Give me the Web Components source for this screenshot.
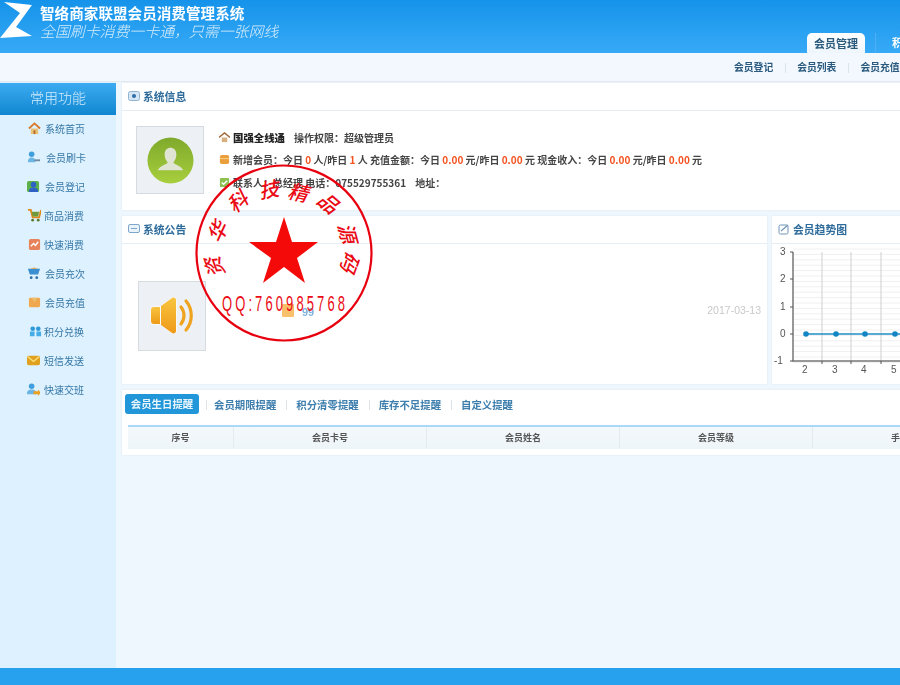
<!DOCTYPE html>
<html lang="zh">
<head>
<meta charset="utf-8">
<title>智络商家联盟会员消费管理系统</title>
<style>
  html, body { margin: 0; padding: 0; width: 900px; height: 685px; overflow: hidden; background: #eef7fe; }
  body { font-family: "Noto Sans CJK SC", "Liberation Sans", sans-serif; }
</style>
</head>
<body>
<app-shell>
  <app-header slot="header"></app-header>
  <sub-nav slot="subnav"></sub-nav>
  <side-menu slot="side"></side-menu>
  <info-panel slot="main"></info-panel>
  <notice-panel slot="main"></notice-panel>
  <remind-panel slot="main"></remind-panel>
</app-shell>
<red-stamp></red-stamp>

<script>
const soft = 'filter: blur(.45px);';

const icons = {
  home: '<path d="M1 7 7 1.500 13 7" fill="none" stroke="#d9772b" stroke-width="2"/><path d="M3 7h8v6H3z" fill="#e9c27a"/><path d="M6 9h2v4H6z" fill="#b56a2a"/>',
  card: '<circle cx="5" cy="3.500" r="3" fill="#3f9fdc"/><path d="M1 12c0-4 2-5 4-5s4 1 4 5z" fill="#6cb6e6"/><path d="M8 9h6v2H8z" fill="#6f8aa0"/>',
  reg: '<rect x="0" y="1" width="13" height="12" rx="2" fill="#5cb04a"/><circle cx="7" cy="5" r="3" fill="#2f62c4"/><path d="M2 13c0-4 2-5 5-5s5 1 5 5z" fill="#2f62c4"/>',
  cart: '<path d="M0 1h3l2 8h7l2-8" fill="none" stroke="#e08a1e" stroke-width="2"/><path d="M4 3h8l-1 5H5z" fill="#6f9a3a"/><circle cx="5" cy="12" r="1.500" fill="#5a7a2c"/><circle cx="11" cy="12" r="1.500" fill="#5a7a2c"/>',
  fast: '<rect x="1" y="1" width="12" height="12" rx="2" fill="#e8825a"/><path d="M3 9l3-3 2 2 3-4" fill="none" stroke="#fff" stroke-width="1.500"/>',
  times: '<path d="M1 2h13l-2 6H3z" fill="#3a8fd0"/><path d="M3 2l5-1.500 4 1.500" fill="#e9a03a"/><circle cx="4.500" cy="11.500" r="1.500" fill="#2c6ea8"/><circle cx="10.500" cy="11.500" r="1.500" fill="#2c6ea8"/>',
  pay: '<rect x="1" y="2" width="12" height="10" rx="1.500" fill="#f0a850"/><path d="M4 2l3 5 3-5" fill="#e8c070"/>',
  gift: '<circle cx="4" cy="4" r="2.500" fill="#2f9ad8"/><circle cx="10" cy="4" r="2.500" fill="#2f9ad8"/><path d="M1 7h5v5H1zM8 7h5v5H8z" fill="#46aee6"/>',
  sms: '<rect x="0" y="2" width="14" height="10" rx="2" fill="#e0a020"/><path d="M1 3l6 5 6-5" fill="none" stroke="#fbe27a" stroke-width="1.500"/>',
  shift: '<circle cx="5" cy="3.500" r="3" fill="#3f9fdc"/><path d="M0 12c0-4 2-5 5-5s5 1 5 5z" fill="#6cb6e6"/><path d="M7 9h5v-2l3 3.500-3 3.500v-2H7z" fill="#eaa020"/>'
};

class AppShell extends HTMLElement {
  connectedCallback() {
    this.attachShadow({ mode: 'open' });
    this.shadowRoot.innerHTML = `
      <style>
        :host { display: flex; flex-direction: column; width: 900px; height: 685px; overflow: hidden; }
        .body { flex: 1; display: flex; min-height: 0; }
        .main { width: 800px; flex: none; margin-left: 6px; padding-top: 1px; display: flex; flex-direction: column; gap: 6px; }
        footer { height: 17px; flex: none; background: #27a0ee; }
      </style>
      <slot name="header"></slot>
      <slot name="subnav"></slot>
      <div class="body">
        <slot name="side"></slot>
        <div class="main"><slot name="main"></slot></div>
      </div>
      <footer></footer>
    `;
  }
}

class AppHeader extends HTMLElement {
  connectedCallback() {
    this.attachShadow({ mode: 'open' });
    this.shadowRoot.innerHTML = `
      <style>
        :host { display: flex; height: 53px; flex: none; color: #fff; background: linear-gradient(#1593ea, #37aaf6); ${soft} }
        svg { width: 34px; height: 41px; flex: none; }
        .brand { margin-left: 6px; padding-top: 3px; display: flex; flex-direction: column; }
        h1 { margin: 0; font-size: 14.600px; line-height: 20px; font-weight: 700; white-space: nowrap; }
        p { margin: 0; font-size: 14.900px; line-height: 16px; font-weight: 300; font-style: italic; color: #d8eefc; white-space: nowrap; }
        nav { margin-left: auto; display: flex; align-self: flex-end; align-items: flex-end; width: 93px; flex: none; overflow: hidden; white-space: nowrap; }
        .tab { width: 58px; height: 20px; flex: none; text-align: center; background: linear-gradient(#fff, #eef6fc); border-radius: 5px 5px 0 0; color: #2a5a7c; font-size: 11px; font-weight: 700; line-height: 21px; }
        .other { margin-left: 10px; padding-left: 16px; border-left: 1px solid #4db0f4; font-size: 11px; font-weight: 700; line-height: 18px; height: 20px; }
      </style>
      <svg viewBox="0 0 34 41"><path d="M4 2 32 5 16 27 32 36 0 38 20 13z" fill="#fff"/></svg>
      <div class="brand">
        <h1>智络商家联盟会员消费管理系统</h1>
        <p>全国刷卡消费一卡通，只需一张网线</p>
      </div>
      <nav><span class="tab">会员管理</span><span class="other">积分管理</span></nav>
    `;
  }
}

class SubNav extends HTMLElement {
  connectedCallback() {
    this.attachShadow({ mode: 'open' });
    this.shadowRoot.innerHTML = `
      <style>
        :host { display: flex; justify-content: flex-end; align-items: center; height: 28px; flex: none; overflow: hidden; background: #f2f8fd; border-bottom: 1px solid #e3e9ef; ${soft} }
        .list { display: flex; gap: 24px; width: 166px; flex: none; white-space: nowrap; font-size: 9.800px; font-weight: 700; color: #2b5a7e; margin-top: -1px; }
        span { flex: none; position: relative; }
        span + span::before { content: ""; position: absolute; left: -12px; top: 3px; height: 10px; border-left: 1px solid #dbe5ec; }
      </style>
      <div class="list"><span>会员登记</span><span>会员列表</span><span>会员充值</span></div>
    `;
  }
}

class SideMenu extends HTMLElement {
  connectedCallback() {
    const items = [
      ['home', '系统首页', 28, 45], ['card', '会员刷卡', 27, 46], ['reg', '会员登记', 27, 45], ['cart', '商品消费', 28, 44],
      ['fast', '快速消费', 28, 44], ['times', '会员充次', 27, 45], ['pay', '会员充值', 28, 45], ['gift', '积分兑换', 29, 44],
      ['sms', '短信发送', 27, 44], ['shift', '快速交班', 27, 44]
    ];
    this.attachShadow({ mode: 'open' });
    this.shadowRoot.innerHTML = `
      <style>
        :host { display: block; width: 116px; flex: none; padding-top: 1px; background: #def1fe; ${soft} }
        h2 { margin: 0; height: 32px; line-height: 28px; text-align: center; font-size: 14px; font-weight: 300; color: #d4ecfb; background: linear-gradient(#3dabf1, #0f87d0); }
        ul { margin: -1px 0 0; padding: 0; list-style: none; }
        li { height: 29px; display: flex; align-items: center; font-size: 10px; color: #3577a6; white-space: nowrap; }
        svg { width: 13px; height: 13px; flex: none; }
      </style>
      <h2>常用功能</h2>
      <ul>
        ${items.map(([icon, text, left, textLeft]) => `<li style="padding-left:${left}px"><svg viewBox="0 0 14 14" style="margin-right:${textLeft - left - 13}px">${icons[icon]}</svg>${text}</li>`).join('')}
      </ul>
    `;
  }
}

class PanelBox extends HTMLElement {
  connectedCallback() {
    this.attachShadow({ mode: 'open' });
    this.shadowRoot.innerHTML = `
      <style>
        :host { display: block; background: #fff; box-shadow: 0 0 2px #dfe8f0; ${soft} }
        header { height: 28px; display: flex; align-items: center; gap: 3px; padding: 0 0 2px 6px; box-sizing: border-box; border-bottom: 1px solid #e6edf3; font-size: 10.800px; font-weight: 700; color: #2f6c9c; white-space: nowrap; }
        ::slotted(svg) { width: 12px; height: 12px; flex: none; }
      </style>
      <header><slot name="icon"></slot><slot name="title"></slot></header>
      <slot></slot>
    `;
  }
}

class InfoPanel extends HTMLElement {
  connectedCallback() {
    const red = v => `<b>${v}</b>`;
    this.attachShadow({ mode: 'open' });
    this.shadowRoot.innerHTML = `
      <style>
        :host { display: block; }
        panel-box { height: 127px; }
        .body { display: flex; align-items: flex-start; padding: 15px 0 0 14px; }
        .avatar { width: 66px; height: 66px; flex: none; display: flex; align-items: center; justify-content: center; background: #edf1f5; border: 1px solid #d6dbe0; }
        .avatar svg { width: 47px; height: 47px; }
        .rows { margin: 0 0 0 15px; display: flex; flex-direction: column; font-family: "Noto Sans CJK TC", sans-serif; }
        .row { height: 22.500px; display: flex; align-items: center; font-size: 10px; font-weight: 700; color: #444; white-space: pre; }
        .row svg { width: 11px; height: 11px; flex: none; margin-right: 3px; }
        .row strong { font-size: 10.400px; color: #222; margin-right: 9px; }
        b { color: #f4511e; font-weight: 700; }
      </style>
      <panel-box>
        <svg slot="icon" viewBox="0 0 12 12"><rect x=".5" y="1.500" width="11" height="9" rx="2" fill="#d5e6f5" stroke="#8fb4d2"/><circle cx="6" cy="6" r="2" fill="#2e6da4"/></svg>
        <span slot="title">系统信息</span>
        <div class="body">
          <div class="avatar">
            <svg viewBox="0 0 48 48">
              <defs><linearGradient id="g" x1="0" y1="0" x2="0" y2="1"><stop offset="0" stop-color="#7fa92c"/><stop offset="1" stop-color="#a8cf3d"/></linearGradient></defs>
              <circle cx="24" cy="24" r="23.500" fill="url(#g)"/>
              <path d="M18 18c0-5 3-7 6-7s6 2 6 7c0 4-2 6-3 8 0 2 8 3 10 8H11c2-5 10-6 10-8-1-2-3-4-3-8z" fill="#e0e4d2"/>
            </svg>
          </div>
          <div class="rows">
            <div class="row"><svg viewBox="0 0 12 12"><path d="M0 6 6 1l6 5" fill="none" stroke="#a1683a" stroke-width="1.500"/><path d="M3 6h6v5H3z" fill="#d8b080"/></svg><strong>国强全线通</strong>操作权限：超级管理员</div>
            <div class="row"><svg viewBox="0 0 12 12"><rect x="1" y="1" width="10" height="10" rx="2" fill="#eb9f3c"/><path d="M1 5h10" stroke="#fbd28a"/></svg>新增会员：今日 ${red(0)} 人/昨日 ${red(1)} 人 充值金额：今日 ${red('0.00')} 元/昨日 ${red('0.00')} 元 现金收入：今日 ${red('0.00')} 元/昨日 ${red('0.00')} 元</div>
            <div class="row"><svg viewBox="0 0 12 12"><rect x="1" y="1" width="10" height="10" rx="1" fill="#8cc152"/><path d="M3 6l2 2 4-4" fill="none" stroke="#fff" stroke-width="1.500"/></svg>联系人：总经理 电话：075529755361    地址：</div>
          </div>
        </div>
      </panel-box>
    `;
  }
}

class NoticePanel extends HTMLElement {
  connectedCallback() {
    const grid = [];
    for (let y = 5; y < 120; y += 5.4) grid.push(`<path d="M21 ${y}H128" stroke="#f0f0f0"/>`);
    this.attachShadow({ mode: 'open' });
    this.shadowRoot.innerHTML = `
      <style>
        :host { display: grid; grid-template-columns: 645px 150px; gap: 5px; }
        panel-box { height: 168px; }
        .notice { display: flex; align-items: center; padding: 37px 6px 0 16px; }
        .box { width: 66px; height: 68px; flex: none; display: flex; align-items: center; justify-content: center; background: #edf1f5; border: 1px solid #d6dbe0; }
        .box svg { width: 44px; height: 40px; }
        .text { flex: 1; display: flex; gap: 8px; align-items: center; margin: 0 0 0 76px; padding-bottom: 12px; }
        .tag { width: 12px; height: 13px; background: #f8c06a; border-radius: 1px; }
        .q { font-family: "Liberation Sans", sans-serif; font-size: 11px; line-height: 12px; color: #7fb2dc; font-weight: 700; margin-top: 4px; }
        time { font-family: "Liberation Sans", sans-serif; font-size: 10.500px; color: #c9c9c9; }
        .chart { display: block; width: 140px; height: 140px; font-family: "Liberation Sans", sans-serif; font-size: 10px; fill: #555; }
      </style>
      <panel-box>
        <svg slot="icon" viewBox="0 0 12 12"><rect x=".5" y="1.500" width="11" height="8" rx="1.500" fill="#eaf2fa" stroke="#7ea6cc"/><path d="M3 5.500h6" stroke="#7ea6cc"/></svg>
        <span slot="title">系统公告</span>
        <div class="notice">
          <div class="box">
            <svg viewBox="0 0 44 40">
              <defs><linearGradient id="o" x1="0" y1="0" x2="0" y2="1"><stop offset="0" stop-color="#f8c440"/><stop offset="1" stop-color="#ee9a18"/></linearGradient></defs>
              <g stroke="#fff" stroke-width="1" paint-order="stroke" fill="url(#o)">
                <path d="M4 11h6v17H4a3 3 0 0 1-3-3V14a3 3 0 0 1 3-3z"/>
                <path d="M11 10 22 2c2-1 4 0 4 2v31c0 2-2 3-4 2L11 29z"/>
              </g>
              <path d="M31 11c4 5 4 12 0 17M36 5c7 8 7 21 0 29" fill="none" stroke="#efa31e" stroke-width="3.200" stroke-linecap="round"/>
            </svg>
          </div>
          <div class="text"><span class="tag"></span><span class="q">99</span><span style="flex:1"></span><time>2017-03-13</time></div>
        </div>
      </panel-box>
      <panel-box>
        <svg slot="icon" viewBox="0 0 12 12"><rect x="1" y="2" width="9" height="9" rx="1.500" fill="none" stroke="#6f94b6"/><path d="M3 8 10 2" stroke="#6f94b6" stroke-width="1.200"/></svg>
        <span slot="title">会员趋势图</span>
        <svg class="chart" viewBox="0 0 140 140">
          ${grid.join('')}
          <path d="M50 8V117M79 8V117M109 8V117" stroke="#cfcfcf"/>
          <path d="M21 8V117H140" fill="none" stroke="#777" stroke-width="1.500"/>
          <path d="M18 8h3M18 35h3M18 63h3M18 90h3M18 117h3M50 117v3M79 117v3M109 117v3" stroke="#555"/>
          <text x="8" y="11">3</text><text x="8" y="38">2</text><text x="8" y="66">1</text><text x="8" y="93">0</text><text x="2" y="120">-1</text>
          <text x="30" y="129">2</text><text x="60" y="129">3</text><text x="89" y="129">4</text><text x="119" y="129">5</text>
          <path d="M34 90H140" stroke="#1c8fc9" stroke-width="1.500"/>
          <g fill="#1286c4"><circle cx="34" cy="90" r="2.800"/><circle cx="64" cy="90" r="2.800"/><circle cx="93" cy="90" r="2.800"/><circle cx="123" cy="90" r="2.800"/></g>
        </svg>
      </panel-box>
    `;
  }
}

class RemindPanel extends HTMLElement {
  connectedCallback() {
    const tabs = ['会员生日提醒', '会员期限提醒', '积分清零提醒', '库存不足提醒', '自定义提醒'];
    const cols = ['序号', '会员卡号', '会员姓名', '会员等级', '手机号码'];
    this.attachShadow({ mode: 'open' });
    this.shadowRoot.innerHTML = `
      <style>
        :host { display: block; height: 65px; background: #fff; box-shadow: 0 0 2px #dfe8f0; padding: 4px 0 0 3px; box-sizing: border-box; ${soft} }
        .tabs { display: flex; align-items: center; height: 20px; font-size: 10.400px; font-weight: 700; color: #3e7fae; white-space: nowrap; }
        .tabs span { position: relative; margin-right: 20px; }
        .tabs span + span::before { content: ""; position: absolute; left: -10px; top: 3px; height: 10px; border-left: 1px solid #d9e4ec; }
        .tabs .on { display: block; box-sizing: border-box; width: 74px; height: 20px; line-height: 20px; text-align: center; margin-right: 15px; color: #e8f5fd; background: #2196d8; border-radius: 3px; }
        .tabs .on + span::before { left: -8px; }
        .table { margin: 11px 0 0 3px; height: 24px; box-sizing: border-box; padding-bottom: 1px; display: grid; grid-template-columns: 106px repeat(4, 193px); border-top: 2px solid #a9d9f6; background: linear-gradient(#f3f8fb, #eef5f9); font-size: 9px; font-weight: 700; color: #555; white-space: nowrap; }
        .table div { display: flex; align-items: center; justify-content: center; border-right: 1px solid #e4ebf0; }
      </style>
      <div class="tabs">${tabs.map((t, i) => `<span class="${i ? '' : 'on'}">${t}</span>`).join('')}</div>
      <div class="table">${cols.map(c => `<div>${c}</div>`).join('')}</div>
    `;
  }
}

// the seal lies over the page, its letters sit one by one around the ring
class RedStamp extends HTMLElement {
  connectedCallback() {
    const chars = [['资', 215, 267, -110], ['华', 218, 232, -65], ['科', 238, 202, -40], ['技', 269, 190, -10], ['精', 298, 193, 12], ['品', 328, 203, 40], ['源', 347, 233, 75], ['码', 350, 262, 110]];
    this.attachShadow({ mode: 'open' });
    this.shadowRoot.innerHTML = `
      <style>
        :host { position: absolute; left: 190px; top: 160px; width: 190px; height: 185px; pointer-events: none; }
        svg { display: block; width: 100%; height: 100%; font-family: "Noto Sans CJK SC", sans-serif; fill: #ea0a14; }
      </style>
      <svg viewBox="190 160 190 185">
        <circle cx="284" cy="253" r="87.500" fill="none" stroke="#e8000f" stroke-width="2.200"/>
        <polygon fill="#f50a0a" points="284,217 292,242 318,242 297,258 305,283 284,267 263,283 271,258 249,242 276,242"/>
        ${chars.map(([c, x, y, r]) => `<text x="${x}" y="${y + 7}" font-size="20" font-weight="500" text-anchor="middle" font-style="italic" transform="rotate(${r} ${x} ${y})">${c}</text>`).join('')}
        <text font-size="13" font-family="Liberation Sans, sans-serif" textLength="123" lengthAdjust="spacing" transform="translate(222 311) scale(1 1.700)">QQ:760985768</text>
      </svg>
    `;
  }
}

customElements.define('panel-box', PanelBox);
customElements.define('app-shell', AppShell);
customElements.define('app-header', AppHeader);
customElements.define('sub-nav', SubNav);
customElements.define('side-menu', SideMenu);
customElements.define('info-panel', InfoPanel);
customElements.define('notice-panel', NoticePanel);
customElements.define('remind-panel', RemindPanel);
customElements.define('red-stamp', RedStamp);
</script>
</body>
</html>
